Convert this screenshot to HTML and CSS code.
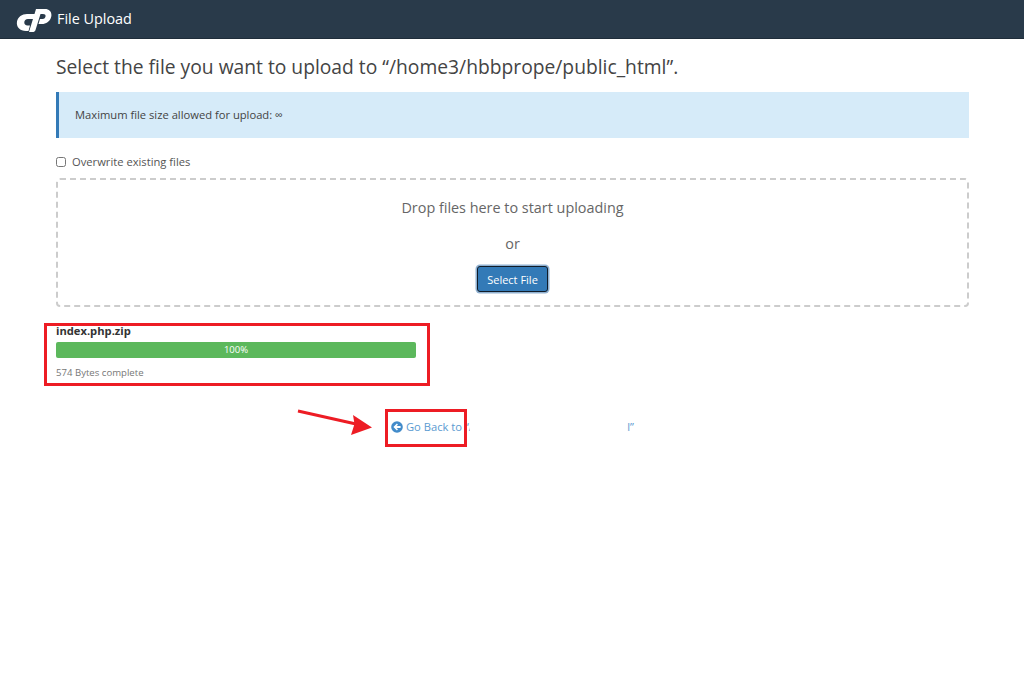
FILE: index.html
```html
<!DOCTYPE html>
<html lang="en">
<head>
<meta charset="utf-8">
<title>File Upload</title>
<link rel="stylesheet" href="styles.css">
</head>
<body>
<header class="topbar">
  <svg class="logo" viewBox="0 0 36 24" width="36" height="24" aria-hidden="true">
    <path fill="#fff" d="M11 6H21L19.500 11H12C9.500 11 8.500 12.500 8.300 14 8 16 9.500 17.500 11.500 17.500H14L12.500 23H10C4 23 0 19 1 13.500 1.800 9 6 6 11 6Z"/>
    <path fill="#fff" d="M13 24 20 1H29C34 1 36.500 5 35 9.500 33.800 13.500 30 16 26 16H22.500L24 11H26.500C28.500 11 29.300 9.500 29.500 8.500 29.800 7 29 6 27 6H24.500L19.500 22C19 23.500 18 24 16.500 24Z"/>
  </svg>
  <span class="brand">File Upload</span>
</header>
<main class="page">
  <h1 class="title">Select the file you want to upload to “/home3/hbbprope/public_html”.</h1>
  <div class="notice">Maximum file size allowed for upload: ∞</div>
  <label class="overwrite"><input class="check" type="checkbox"> Overwrite existing files</label>
  <section class="dropzone">
    <p class="drop-text">Drop files here to start uploading</p>
    <p class="drop-or">or</p>
    <button class="select-btn" type="button">Select File</button>
  </section>
  <section class="upload">
    <div class="file-name">index.php.zip</div>
    <div class="bar">100%</div>
    <div class="status">574 Bytes complete</div>
  </section>
  <p class="back">
    <a class="back-link" href="#">
      <svg class="back-icon" viewBox="0 0 12 12" width="12" height="12" aria-hidden="true">
        <circle cx="6" cy="6" r="5.800" fill="#428bca"/>
        <path fill="#fff" d="M2.400 6 5.900 2.600 7 3.700 5.500 5.100H9.600V6.900H5.500L7 8.300 5.900 9.400Z"/>
      </svg>
      Go Back to “/home3/hbbprope/public_html”
    </a>
  </p>
</main>
<div class="annot box-upload"></div>
<div class="annot box-back"></div>
<div class="redact"></div>
<svg class="arrow" viewBox="0 0 80 30" width="80" height="30" aria-hidden="true">
  <path stroke="#ed1c24" stroke-width="3" d="M2 3 60 16"/>
  <path fill="#ed1c24" d="M76 19.500 55 27 58.500 16 57 7Z"/>
</svg>
</body>
</html>
```
FILE: styles.css
```css
* { box-sizing: border-box; }
html, body { margin: 0; padding: 0; }
body {
  background: #fff;
  color: #555;
  font-family: "Open Sans", "Noto Sans", sans-serif;
  font-size: 12px;
  line-height: 17px;
  height: 684px;
  overflow: hidden;
  position: relative;
}
.topbar {
  height: 39px;
  background: #293a4a;
  border-bottom: 1px solid #1f2d3a;
  display: flex;
  align-items: center;
  padding-left: 16px;
  gap: 5px;
  color: #fff;
}
.logo { display: block; margin-top: 2px; }
.brand { font-size: 14.400px; line-height: 20px; }
.page { padding: 0 55px 0 56px; }
.title {
  margin: 16px 0 0;
  height: 37px;
  font-size: 19.250px;
  line-height: 24px;
  font-weight: 400;
  color: #444;
}
.notice {
  height: 46px;
  background: #d6ebf9;
  border-left: 3px solid #337ab7;
  padding: 14px 16px;
  font-size: 11.200px;
  color: #444;
}
.overwrite {
  display: flex;
  align-items: center;
  margin-top: 15px;
  height: 17px;
  font-size: 11.200px;
  gap: 6px;
}
.check { margin: 1px 0 0; width: 10px; height: 10px; }
.dropzone {
  margin-top: 8px;
  height: 129px;
  border: 2px dashed #ccc;
  border-radius: 4px;
  text-align: center;
  padding-top: 18px;
}
.drop-text { margin: 0; font-size: 14.400px; line-height: 20px; color: #666; }
.drop-or { margin: 16px 0 0; font-size: 14.400px; line-height: 20px; color: #666; }
.select-btn {
  display: block;
  margin: 12px auto 0;
  width: 71px;
  height: 26px;
  background: #337ab7;
  border: 1.500px solid #111c28;
  box-shadow: 0 0 0 1.500px #8fb0d0;
  border-radius: 3px;
  color: #fff;
  font: 400 11px/17px "Open Sans", sans-serif;
  padding: 0;
}
.upload { margin-top: 16px; width: 360px; }
.file-name { font-size: 11.200px; font-weight: 700; line-height: 16px; color: #333; }
.bar {
  margin-top: 3px;
  height: 16px;
  background: #5cb85c;
  border-radius: 2px;
  color: #fff;
  font-size: 9.500px;
  line-height: 16px;
  text-align: center;
}
.status { margin-top: 8px; font-size: 9.600px; line-height: 14px; color: #777; }
.back { margin: 39px 0 0; text-align: center; font-size: 11.200px; line-height: 16px; }
.back-link { color: #5b9bd1; text-decoration: none; }
.back-icon { vertical-align: -1.500px; }
.annot { position: absolute; border: 3px solid #ed1c24; }
.box-upload { left: 44px; top: 323px; width: 386px; height: 63px; }
.box-back { left: 385px; top: 409px; width: 82px; height: 38px; }
.redact { position: absolute; left: 470px; top: 415px; width: 157px; height: 24px; background: #fff; }
.arrow { position: absolute; left: 296px; top: 408px; }
```
